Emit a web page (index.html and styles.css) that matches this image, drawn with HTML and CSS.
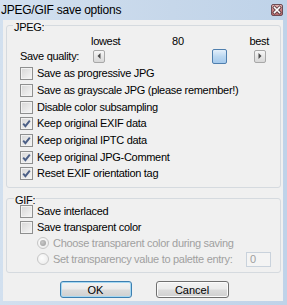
FILE: index.html
```html
<!DOCTYPE html>
<html>
<head>
<meta charset="utf-8">
<link rel="stylesheet" href="styles.css">
</head>
<body>
<div class="window">
  <div class="titlebar">
    <span class="title">JPEG/GIF save options</span>
    <span class="close"><svg width="10" height="10" viewBox="0 0 10 10"><path d="M2.5 2.5 L7.5 7.5 M7.5 2.5 L2.5 7.5" stroke="#5a3a40" stroke-width="3.2" stroke-linecap="square"/><path d="M2.5 2.5 L7.5 7.5 M7.5 2.5 L2.5 7.5" stroke="#fff" stroke-width="1.6" stroke-linecap="square"/></svg></span>
  </div>
  <div class="client">
    <div class="group jpeg">
      <div class="caption">JPEG:</div>
      <div class="scale"><span>lowest</span><span class="mid">80</span><span>best</span></div>
      <div class="quality">
        <span class="qlabel">Save quality:</span>
        <div class="slider">
          <span class="arrow"><svg width="4" height="6" viewBox="0 0 4 6"><path d="M3.5 0 L0.5 3 L3.5 6 Z" fill="#4a4a4a"/></svg></span>
          <span class="track"><span class="thumb"></span></span>
          <span class="arrow"><svg width="4" height="6" viewBox="0 0 4 6"><path d="M0.5 0 L3.5 3 L0.5 6 Z" fill="#4a4a4a"/></svg></span>
        </div>
      </div>
      <div class="row"><span class="cb"></span>Save as progressive JPG</div>
      <div class="row"><span class="cb"></span>Save as grayscale JPG (please remember!)</div>
      <div class="row"><span class="cb"></span>Disable color subsampling</div>
      <div class="row"><span class="cb on"><svg width="11" height="11" viewBox="0 0 11 11"><path d="M2.2 5.6 L4.4 8.2 L8.8 2.6" fill="none" stroke="#4b5f86" stroke-width="1.9"/></svg></span>Keep original EXIF data</div>
      <div class="row"><span class="cb on"><svg width="11" height="11" viewBox="0 0 11 11"><path d="M2.2 5.6 L4.4 8.2 L8.8 2.6" fill="none" stroke="#4b5f86" stroke-width="1.9"/></svg></span>Keep original IPTC data</div>
      <div class="row"><span class="cb on"><svg width="11" height="11" viewBox="0 0 11 11"><path d="M2.2 5.6 L4.4 8.2 L8.8 2.6" fill="none" stroke="#4b5f86" stroke-width="1.9"/></svg></span>Keep original JPG-Comment</div>
      <div class="row"><span class="cb on"><svg width="11" height="11" viewBox="0 0 11 11"><path d="M2.2 5.6 L4.4 8.2 L8.8 2.6" fill="none" stroke="#4b5f86" stroke-width="1.9"/></svg></span>Reset EXIF orientation tag</div>
    </div>
    <div class="group gif">
      <div class="caption">GIF:</div>
      <div class="grow"><span class="cb"></span>Save interlaced</div>
      <div class="grow"><span class="cb"></span>Save transparent color</div>
      <div class="grow sub disabled"><span class="radio on"></span>Choose transparent color during saving</div>
      <div class="grow sub disabled"><span class="radio"></span>Set transparency value to palette entry:<span class="entry">0</span></div>
    </div>
    <div class="buttons">
      <span class="btn default">OK</span>
      <span class="btn">Cancel</span>
    </div>
  </div>
</div>
</body>
</html>
```

FILE: styles.css
```css
* { box-sizing: border-box; }
html, body { margin: 0; padding: 0; }
body {
  width: 287px;
  height: 305px;
  overflow: hidden;
  font-family: "Liberation Sans", Arial, sans-serif;
  font-size: 11px;
  letter-spacing: -0.3px;
  color: #000;
  background: #c4d6ea;
}
.window {
  display: flex;
  flex-direction: column;
  height: 305px;
  background: linear-gradient(90deg, #d2e0ef 0, #c6d7ea 60%, #bfd3e9 100%);
}
.titlebar {
  height: 20px;
  flex: none;
  display: flex;
  align-items: center;
  padding: 0 4px 0 1px;
}
.title {
  font-size: 12px;
  letter-spacing: -0.25px;
  line-height: 14px;
  color: #000;
  flex: 1;
}
.close {
  width: 12px;
  height: 12px;
  margin-right: 0;
  display: flex;
  align-items: center;
  justify-content: center;
  border: 1px solid #6c4c54;
  border-radius: 2px;
  background: linear-gradient(#e6b4b4, #c27a7c 55%, #b86a6c);
}
.client {
  flex: 1;
  margin: 0 4px 5px 3px;
  padding: 5px 2px 3px 3px;
  background: #f0f0f0;
  display: flex;
  flex-direction: column;
}
.group {
  border: 1px solid #d5dadf;
  border-radius: 3px;
}
.caption {
  width: fit-content;
  line-height: 13px;
  height: 13px;
  margin: -5px 0 0 6px;
  padding: 0 1px;
  background: #f0f0f0;
}
.jpeg { height: 163px; }
.scale {
  margin-top: 1px;
  height: 12px;
  line-height: 12px;
  display: flex;
  justify-content: space-between;
  padding: 0 11px 0 84px;
}
.scale .mid { margin-right: 14px; }
.quality {
  margin-top: 2px;
  height: 14px;
  display: flex;
  align-items: center;
  padding-left: 13px;
}
.qlabel { width: 73px; flex: none; line-height: 13px; }
.slider {
  width: 173px;
  height: 14px;
  display: flex;
  align-items: center;
}
.arrow {
  width: 12px;
  height: 13px;
  flex: none;
  display: flex;
  align-items: center;
  justify-content: center;
  border: 1px solid #a8a8a8;
  border-radius: 2px;
  background: linear-gradient(#f7f7f7, #e6e6e6 50%, #d8d8d8);
}
.track {
  flex: 1;
  height: 14px;
  display: flex;
  align-items: center;
  padding-left: 107px;
}
.thumb {
  width: 15px;
  height: 15px;
  border: 1px solid #4f7fae;
  border-radius: 2px;
  background: linear-gradient(#e4f0fb, #bcd8f1 50%, #a4c9ec);
}
.row {
  height: 16.67px;
  display: flex;
  align-items: center;
  padding-left: 13px;
  line-height: 13px;
}
.jpeg .row:first-of-type { margin-top: 0; }
.quality + .row { margin-top: 2.67px; }
.cb {
  width: 13px;
  height: 13px;
  flex: none;
  margin-right: 4px;
  border: 1px solid #8e8f8f;
  background: linear-gradient(135deg, #d6d6d6, #f6f6f6);
  box-shadow: inset 0 0 0 1px #f2f2f2;
  display: flex;
  align-items: center;
  justify-content: center;
}
.gif { height: 75px; margin-top: 10px; }
.gif .caption { margin-bottom: -4px; margin-left: 7px; }
.grow {
  height: 16px;
  display: flex;
  align-items: center;
  padding-left: 13px;
  line-height: 13px;
}
.grow.sub { padding-left: 30px; }
.disabled { color: #a0a0a0; }
.radio {
  width: 12px;
  height: 12px;
  flex: none;
  margin-right: 4px;
  border-radius: 50%;
  border: 1px solid #c6c6c6;
  background: radial-gradient(circle at 40% 40%, #fdfdfd, #e8e8e8);
  display: flex;
  align-items: center;
  justify-content: center;
}
.radio.on::after {
  content: "";
  width: 6px;
  height: 6px;
  border-radius: 50%;
  background: radial-gradient(circle at 40% 40%, #c8c8c8, #9a9a9a);
}
.entry {
  margin-left: auto;
  margin-right: 9px;
  width: 25px;
  height: 15px;
  border: 1px solid #c9d2dc;
  background: #f4f4f4;
  padding-left: 3px;
  line-height: 13px;
  color: #a0a0a0;
}
.buttons {
  margin-top: 8px;
  display: flex;
  justify-content: center;
  gap: 24px;
  padding-left: 1px;
}
.btn {
  width: 73px;
  height: 17px;
  display: flex;
  align-items: center;
  justify-content: center;
  border: 1px solid #707070;
  border-radius: 3px;
  background: linear-gradient(#f3f3f3, #ebebeb 48%, #dcdcdc 52%, #cfcfcf);
  box-shadow: inset 0 0 0 1px #fbfbfb;
  letter-spacing: 0;
}
.btn.default {
  width: 72px;
  border-color: #3c7fb1;
  box-shadow: inset 0 0 0 1px #a6d8f2;
}
```
